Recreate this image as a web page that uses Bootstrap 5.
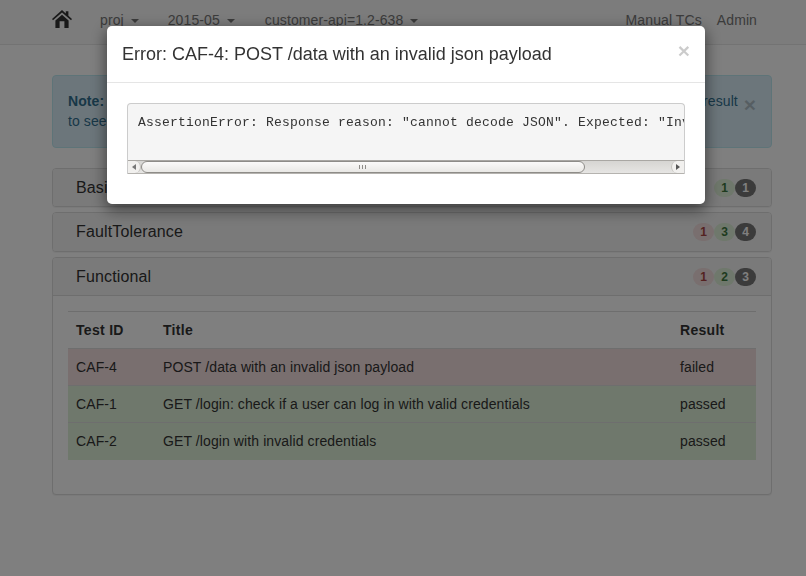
<!DOCTYPE html>
<html lang="en">
<head>
  <meta charset="UTF-8">
  <title>Test report</title>
  <link href="https://cdn.jsdelivr.net/npm/bootstrap@5.3.0/dist/css/bootstrap.min.css" rel="stylesheet">
  <style>
    body { font-family: "Liberation Sans", Arial, sans-serif; font-size: 14px; line-height: 20px; letter-spacing: .1px; color: #333; background: #fff; overflow: hidden; }
    .top-bar { height: 45px; background: #f8f8f8; border-bottom: 1px solid #e7e7e7; padding: 0 49px 4px 52px; color: #777; }
    .top-link { color: #777; text-decoration: none; }
    .home-link { margin-top: -2px; }
    .caret-down { display: inline-block; width: 0; height: 0; margin-left: 3px; vertical-align: middle; border-top: 4px solid #777; border-left: 4px solid transparent; border-right: 4px solid transparent; }
    .page-wrap { width: 720px; margin: 30px 0 0 52px; }
    .note-box { height: 73px; padding: 15px 15px; margin-bottom: 20px; background: #d9edf7; border: 1px solid #bce8f1; border-radius: 4px; color: #31708f; }
    .note-close { font-size: 21px; font-weight: 700; color: #000; opacity: .2; line-height: 1; margin-top: 3px; }
    .suite-panel { border: 1px solid #ddd; border-radius: 4px; margin-bottom: 5px; background: #fff; box-shadow: 0 1px 1px rgba(0,0,0,.05); }
    .suite-head { height: 37px; background: #f5f5f5; padding: 0 15px 0 23px; font-size: 16px; letter-spacing: .15px; color: #333; border-radius: 3px; }
    .suite-head.is-tall { height: 38px; }
    .suite-head.is-open { height: 38px; border-bottom: 1px solid #ddd; border-radius: 3px 3px 0 0; }
    .suite-body { padding: 15px 15px 34px; }
    .count-pill { display: inline-block; width: 21px; height: 18px; padding: 3px 0; font-size: 12px; font-weight: 700; line-height: 12px; letter-spacing: 0; text-align: center; border-radius: 10px; }
    .pill-fail { background: #f2dede; color: #a94442; }
    .pill-pass { background: #dff0d8; color: #3c763d; }
    .pill-total { background: #777; color: #fff; }
    .result-table { width: 100%; border-collapse: collapse; }
    .result-table th, .result-table td { padding: 8px; height: 37px; line-height: 20px; border-top: 1px solid #ddd; }
    .result-table th { border-bottom: 1px solid #ddd; letter-spacing: .3px; }
    .row-fail td { background: #f2dede; }
    .row-pass td { background: #dff0d8; }
    .modal .err-dialog { max-width: 600px; width: 600px; margin: 25px 0 0 106px; }
    .err-content { border: 1px solid transparent; background-clip: padding-box; border-radius: 6px; box-shadow: 0 5px 15px rgba(0,0,0,.5); background-color: #fff; }
    .err-head { height: 57px; padding: 0 15px; border-bottom: 1px solid #e5e5e5; }
    .err-title { font-size: 18px; line-height: 20px; letter-spacing: 0; color: #333; margin: 0; font-weight: 500; }
    .err-close { font-size: 21px; font-weight: 700; color: #000; opacity: .2; line-height: 1; margin-top: -8px; }
    .err-body { padding: 20px 20px 30px; }
    .trace-box { border: 1px solid #ccc; border-bottom: 0; border-radius: 4px 4px 0 0; background: #f5f5f5; overflow: hidden; }
    .trace-text { height: 56px; margin: 0; padding: 10px 10px 0; font-family: "Liberation Mono", "Courier New", monospace; font-size: 13px; line-height: 18px; color: #333; white-space: pre; overflow: hidden; letter-spacing: .2px; }
    .fake-bar { height: 14px; background: linear-gradient(#d6d5d2, #e6e5e3); border-top: 1px solid #a9a7a3; border-bottom: 1px solid #b5b3af; }
    .bar-btn { width: 13px; background: #f1f0ee; border: 0 solid #c4c2be; }
    .bar-btn-left { border-right-width: 1px; border-radius: 0 6px 6px 0; }
    .bar-btn-right { border-left-width: 1px; border-radius: 6px 0 0 6px; }
    .bar-thumb { width: 444px; margin-left: 0; background: linear-gradient(#fbfaf9, #e9e8e5); border: 1px solid #8e8c88; border-radius: 7px; font-size: 0; }
    .bar-grip { width: 7px; height: 4px; background: repeating-linear-gradient(90deg, #8e8c88 0 1px, transparent 1px 3px); margin-left: 217px; }
    .bar-arrow-l { width: 0; height: 0; border-right: 4px solid #777; border-top: 3px solid transparent; border-bottom: 3px solid transparent; }
    .bar-arrow-r { width: 0; height: 0; border-left: 4px solid #555; border-top: 3px solid transparent; border-bottom: 3px solid transparent; }
  </style>
</head>
<body>
<nav class="top-bar d-flex align-items-center">
  <a href="#" class="top-link home-link d-flex me-4">
    <svg width="20" height="18" viewBox="0 0 20 18"><path fill="#333" d="M10 0 L13.8 3.4 V1.2 H16.4 V5.7 L20 9 L19 10.2 L10 2.6 L1 10.2 L0 9 Z M3.4 10.4 L10 4.8 L16.6 10.4 V18 H12.4 V11.2 H7.6 V18 H3.4 Z"/></svg>
  </a>
  <a href="#" class="top-link ms-1">proj <span class="caret-down"></span></a>
  <a href="#" class="top-link" style="margin-left:29px">2015-05 <span class="caret-down"></span></a>
  <a href="#" class="top-link" style="margin-left:30px">customer-api=1.2-638 <span class="caret-down"></span></a>
  <a href="#" class="top-link ms-auto">Manual TCs</a>
  <a href="#" class="top-link" style="margin-left:15px">Admin</a>
</nav>

<div class="page-wrap">
  <div class="note-box d-flex justify-content-between">
    <div><strong>Note:</strong> Click on the title of a failing test case in the table below to open the dialog with its detailed test result<br>to see the error message.</div>
    <span class="note-close">×</span>
  </div>

  <div class="suite-panel">
    <div class="suite-head d-flex justify-content-between align-items-center">
      <span>Basic</span>
      <span class="d-flex"><span class="count-pill pill-pass">1</span><span class="count-pill pill-total">1</span></span>
    </div>
  </div>
  <div class="suite-panel">
    <div class="suite-head is-tall d-flex justify-content-between align-items-center">
      <span>FaultTolerance</span>
      <span class="d-flex"><span class="count-pill pill-fail">1</span><span class="count-pill pill-pass">3</span><span class="count-pill pill-total">4</span></span>
    </div>
  </div>
  <div class="suite-panel">
    <div class="suite-head is-open d-flex justify-content-between align-items-center">
      <span>Functional</span>
      <span class="d-flex"><span class="count-pill pill-fail">1</span><span class="count-pill pill-pass">2</span><span class="count-pill pill-total">3</span></span>
    </div>
    <div class="suite-body">
      <table class="result-table">
        <thead>
          <tr><th style="width:87px">Test ID</th><th>Title</th><th style="width:84px">Result</th></tr>
        </thead>
        <tbody>
          <tr class="row-fail"><td>CAF-4</td><td>POST /data with an invalid json payload</td><td>failed</td></tr>
          <tr class="row-pass"><td>CAF-1</td><td>GET /login: check if a user can log in with valid credentials</td><td>passed</td></tr>
          <tr class="row-pass"><td>CAF-2</td><td>GET /login with invalid credentials</td><td>passed</td></tr>
        </tbody>
      </table>
    </div>
  </div>
</div>

<div class="modal-backdrop show"></div>
<div class="modal d-block" tabindex="-1">
  <div class="modal-dialog err-dialog">
    <div class="err-content">
      <div class="err-head d-flex justify-content-between align-items-center">
        <h4 class="err-title">Error: CAF-4: POST /data with an invalid json payload</h4>
        <span class="err-close">×</span>
      </div>
      <div class="err-body">
        <div class="trace-box">
          <pre class="trace-text">AssertionError: Response reason: "cannot decode JSON". Expected: "Invalid json payload"</pre>
          <div class="fake-bar d-flex">
            <div class="bar-btn bar-btn-left d-flex align-items-center justify-content-center"><span class="bar-arrow-l"></span></div>
            <div class="bar-thumb d-flex align-items-center"><span class="bar-grip"></span></div>
            <div class="flex-grow-1"></div>
            <div class="bar-btn bar-btn-right d-flex align-items-center justify-content-center"><span class="bar-arrow-r"></span></div>
          </div>
        </div>
      </div>
    </div>
  </div>
</div>
<script src="https://cdn.jsdelivr.net/npm/bootstrap@5.3.0/dist/js/bootstrap.bundle.min.js"></script>
</body>
</html>
